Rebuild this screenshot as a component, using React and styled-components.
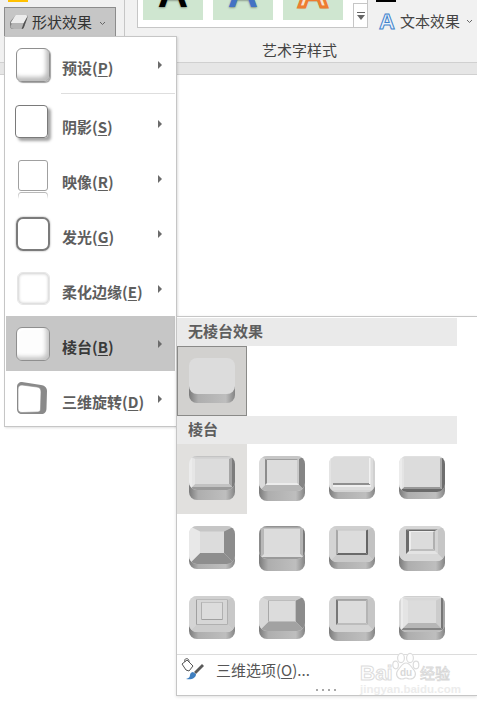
import React, { useId } from 'react';
import styled, { createGlobalStyle, css } from 'styled-components';

const GlobalStyle = createGlobalStyle`
  html, body {
    margin: 0;
    padding: 0;
    background: #ffffff;
  }
`;

const CJK = `"Noto Sans CJK SC", "Noto Sans", sans-serif`;

const Page = styled.div`
  position: relative;
  width: 477px;
  height: 707px;
  overflow: hidden;
  background: #ffffff;
  font-family: ${CJK};
  font-size: 15px;
`;

/* ---------- ribbon behind the menus ---------- */

const Ribbon = styled.div`
  display: flex;
  height: 62px;
  background: #f1f1f1;
  color: #444444;
`;

const ShapeGroup = styled.div`
  box-sizing: border-box;
  width: 125px;
  padding-left: 8px;
  border-right: 1px solid #c6c6c6;
`;

const YellowMark = styled.div`
  width: 20px;
  height: 2px;
  background: #ffc000;
`;

const ArtGroup = styled.div`
  display: flex;
  flex-direction: column;
  width: 349px;
`;

const ArtTop = styled.div`
  display: flex;
  padding-left: 12px;
`;

const Gallery = styled.div`
  box-sizing: border-box;
  display: flex;
  gap: 10px;
  width: 231px;
  height: 28px;
  padding-left: 5px;
  background: #ffffff;
  border: 1px solid #c6c6c6;
  border-top: 0;
`;

const Tile = styled.div`
  flex: none;
  display: flex;
  justify-content: center;
  width: 60px;
  height: 20px;
  overflow: hidden;
  background: #cfe6d0;
`;

const TileLetter = styled.span`
  margin-top: -28px;
  font-family: "Liberation Sans", sans-serif;
  font-size: 42px;
  font-weight: 700;
  line-height: 42px;
  color: ${(p) => p.$fill};
  -webkit-text-stroke: ${(p) => (p.$stroke ? `3px ${p.$stroke}` : '0')};
  text-shadow: 0 1px 2px rgba(0, 0, 0, 0.35);
`;

const MoreButton = styled.div`
  box-sizing: border-box;
  display: flex;
  align-items: center;
  justify-content: center;
  align-self: flex-end;
  width: 18px;
  height: 24px;
  margin-left: auto;
  border-top: 1px solid #c6c6c6;
  border-left: 1px solid #c6c6c6;
`;

const ArtRight = styled.div`
  display: flex;
  flex-direction: column;
  padding-left: 8px;
`;

const BlackMark = styled.div`
  width: 20px;
  height: 2px;
  background: #000000;
`;

const TextEffect = styled.div`
  display: flex;
  align-items: center;
  height: 22px;
  margin-top: 7px;
  margin-left: 3px;
  white-space: nowrap;
  color: #444444;
`;

const TextEffectLetter = styled.span`
  width: 21px;
  margin-top: 3px;
  font-family: "Liberation Sans", sans-serif;
  font-size: 22px;
  font-weight: 700;
  line-height: 22px;
  color: #eaf2fb;
  -webkit-text-stroke: 1px #3f83cc;
`;

const Chevron = styled.svg`
  flex: none;
  width: 7px;
  height: 5px;
  margin-left: ${(p) => p.$gap}px;
  margin-top: 2px;
`;

const ArtLabel = styled.div`
  margin-top: 8px;
  text-align: center;
  line-height: 22px;
  color: #444444;
`;

const Band = styled.div`
  box-sizing: border-box;
  height: 13px;
  background: #e6e6e6;
  border-top: 1px solid #d0d0d0;
  border-bottom: 1px solid #d0d0d0;
`;

const ShapeButton = styled.div`
  position: absolute;
  top: 7px;
  left: 4px;
  box-sizing: border-box;
  display: flex;
  align-items: center;
  width: 112px;
  height: 30px;
  padding-left: 4px;
  background: #c6c6c6;
  border: 1px solid #8c8c8c;
  color: #333333;
  white-space: nowrap;
`;

const ShapeButtonLabel = styled.span`
  margin-left: 3px;
  margin-top: -2px;
`;

/* ---------- left menu ---------- */

const Menu = styled.div`
  position: absolute;
  top: 36px;
  left: 4px;
  box-sizing: border-box;
  width: 173px;
  height: 391px;
  padding: 0 1px;
  background: #ffffff;
  border: 1px solid #c6c6c6;
  box-shadow: 1px 1px 2px rgba(0, 0, 0, 0.12);
`;

const MenuRow = styled.div`
  display: flex;
  align-items: center;
  height: 55px;
  padding-left: 10px;
  background: ${(p) => (p.$active ? '#c6c6c6' : 'transparent')};
  color: ${(p) => (p.$active ? '#3a3a3a' : '#5e5e5e')};
`;

const IconSlot = styled.div`
  flex: none;
  display: flex;
  width: 46px;
`;

const effectKinds = {
  preset: css`
    border: 1px solid #8f8f8f;
    border-radius: 6px;
    box-shadow: inset -3px -4px 4px #bdbdbd, 1px 1px 1px #a0a0a0;
  `,
  shadow: css`
    width: 31px;
    height: 31px;
    margin: -4px 0 0 -1px;
    border: 1px solid #7a7a7a;
    border-radius: 4px;
    box-shadow: 3px 3px 3px #a5a5a5;
  `,
  reflection: css`
    position: relative;
    width: 28px;
    height: 29px;
    margin: -7px 0 0 2px;
    border: 1px solid #a0a0a0;
    border-radius: 3px;

    &::after {
      content: '';
      position: absolute;
      top: 31px;
      left: -1px;
      right: -1px;
      height: 6px;
      border: 1px solid #b4b4b4;
      border-bottom: 0;
      border-radius: 3px 3px 0 0;
      -webkit-mask-image: linear-gradient(#000000, transparent);
      mask-image: linear-gradient(#000000, transparent);
    }
  `,
  glow: css`
    box-sizing: border-box;
    width: 34px;
    height: 34px;
    border: 2px solid #7b7b7b;
    border-radius: 7px;
    box-shadow: 0 0 2px #9a9a9a;
  `,
  soft: css`
    width: 31px;
    height: 31px;
    margin-left: 1px;
    border: 1px solid #e6e6e6;
    border-radius: 6px;
    box-shadow: inset 0 0 3px 1px #cfcfcf;
  `,
  bevel: css`
    background: #fdfdfd;
    border: 1px solid #8f8f8f;
    border-radius: 6px;
    box-shadow: inset -3px -3px 4px #c4c4c4, inset 2px 2px 2px #ffffff;
  `,
};

const EffectIcon = styled.div`
  flex: none;
  width: 32px;
  height: 32px;
  ${(p) => effectKinds[p.$kind]}
`;

const MenuLabel = styled.span`
  padding-top: 5px;
  font-weight: 700;
  white-space: nowrap;

  u {
    text-underline-offset: 2px;
  }
`;

const SubArrow = styled.div`
  flex: none;
  width: 0;
  height: 0;
  margin-left: auto;
  margin-right: 13px;
  border-top: 4px solid transparent;
  border-bottom: 4px solid transparent;
  border-left: 4px solid #6b6b6b;
`;

const MenuSeparator = styled.div`
  height: 1px;
  margin: 1px 0 2px 55px;
  background: #dedede;
`;

/* ---------- bevel submenu ---------- */

const SubMenu = styled.div`
  position: absolute;
  top: 316px;
  left: 176px;
  box-sizing: border-box;
  width: 301px;
  height: 380px;
  padding-top: 1px;
  background: #ffffff;
  border: 1px solid #c6c6c6;
  border-right: 0;
  box-shadow: 0 1px 3px rgba(0, 0, 0, 0.12);
`;

const SectionHeader = styled.div`
  box-sizing: border-box;
  width: 280px;
  height: 28px;
  padding-left: 11px;
  background: #eaeaea;
  color: #5e5e5e;
  font-weight: 700;
  line-height: 26px;
`;

const BevelGrid = styled.div`
  display: grid;
  grid-template-columns: repeat(4, 70px);
  grid-auto-rows: 70px;
`;

const BevelCell = styled.div`
  box-sizing: border-box;
  display: flex;
  justify-content: center;
  padding-top: ${(p) => (p.$selected ? 11 : 12)}px;
  background: ${(p) => (p.$selected ? '#d2d1cf' : p.$hot ? '#e1e0de' : 'transparent')};
  border: ${(p) => (p.$selected ? '1px solid #8a8a88' : '0')};
`;

const OptionsRow = styled.div`
  display: flex;
  align-items: flex-start;
  height: 39px;
  padding: 2px 0 0 4px;
  box-sizing: border-box;
  border-top: 1px solid #dcdcdc;
  color: #555555;
  white-space: nowrap;

  u {
    text-underline-offset: 2px;
  }
`;

const OptionsLabel = styled.span`
  margin-left: 11px;
  margin-top: 2px;
  line-height: 22px;
`;

const ResizeDots = styled.div`
  position: absolute;
  left: 139px;
  bottom: 4px;
  display: flex;
  gap: 4px;
`;

const Dot = styled.span`
  width: 2px;
  height: 2px;
  background: #a8a8a8;
`;

/* ---------- watermark ---------- */

const Watermark = styled.div`
  position: absolute;
  top: 652px;
  left: 360px;
  width: 92px;
  height: 44px;
  display: flex;
  flex-wrap: wrap;
  align-items: flex-start;
  pointer-events: none;
`;

const MarkWord = styled.span`
  width: 32px;
  margin-top: 11px;
  font-family: "Liberation Sans", sans-serif;
  font-size: 21px;
  font-weight: 700;
  line-height: 20px;
  color: #ffffff;
  -webkit-text-stroke: 1px #dcdcdc;
`;

const MarkCjk = styled.span`
  margin-top: 12px;
  font-size: 15px;
  line-height: 18px;
  color: #ffffff;
  -webkit-text-stroke: 0.8px #d8d8d8;
`;

const MarkUrl = styled.span`
  width: 100%;
  margin-top: -1px;
  font-family: "Liberation Sans", sans-serif;
  font-size: 11.5px;
  font-weight: 700;
  line-height: 12px;
  color: #ececec;
  white-space: nowrap;
`;

/* ---------- drawn icons ---------- */

const ChevronDown = ({ gap }) => (
  <Chevron $gap={gap} viewBox="0 0 7 5">
    <path d="M1 1l2.5 2.5L6 1" fill="none" stroke="#666" strokeWidth="1" />
  </Chevron>
);

const EraserIcon = () => (
  <svg width="20" height="16" viewBox="0 0 20 16">
    <path d="M7 1h10c1.500 0 2 1 1.500 2.500L15 13c-.5 1-1 2-2.500 2H4c-2 0-3-1-3-3V9c0-1 .5-2 1.500-3z" fill="#7f7f7f" />
    <path d="M7 1h10c1.200 0 1.600 1 1 2L14.500 9.500 3 9.500c-1 0-1.500-1-.5-2L6 2c.3-.6.5-1 1-1z" fill="#ececec" />
    <path d="M18.500 3L15 13c-.5 1-1 2-2.500 2l2-5.500z" fill="#505050" />
    <path d="M3 9.500h11.500L12.500 15H5c-2 0-3.500-1-3.500-3z" fill="#b4b4b4" />
  </svg>
);

const RotatedIcon = () => (
  <svg width="32" height="35" viewBox="0 0 32 35">
    <path d="M6 1l19 3c3 .5 6 2 6 6l-.5 17c0 4-2 6-5 6L6 33c-3 0-5-2-5-5V6c0-3 2-5 5-5z" fill="#8a8a8a" />
    <path d="M6 4l15 2c3 .5 4 2 4 5l-.5 17c0 2-1 3-3 3L6 31.500c-3-.2-4-1.500-4-4V8c0-3 2-4 4-4z" fill="#ffffff" stroke="#8a8a8a" strokeWidth="0.6" />
  </svg>
);

const BucketBrushIcon = () => (
  <svg width="24" height="24" viewBox="0 0 24 24">
    <path d="M1 7l5-4 6 6-4 5-3-1z" fill="#ffffff" stroke="#555" strokeWidth="1" />
    <path d="M4 5c-1-3 1-4 3-3 1 1 1 2 1 3" fill="none" stroke="#555" strokeWidth="1" />
    <path d="M23 9l-8 8-2-2 8-8z" fill="#5a5a5a" />
    <path d="M12 15l3 2c0 4-4 6-10 5 3-1 4-2 4-4 0-2 2-3 3-3z" fill="#3f7fc0" />
  </svg>
);

const MoreIcon = () => (
  <svg width="10" height="10" viewBox="0 0 10 10">
    <rect x="1" y="1" width="8" height="1" fill="#666" />
    <path d="M1 4h8L5 9z" fill="#666" />
  </svg>
);

const PawIcon = () => (
  <svg width="28" height="30" viewBox="0 0 28 30">
    <g fill="#ffffff" stroke="#dcdcdc" strokeWidth="1.2">
      <ellipse cx="9" cy="6" rx="3.4" ry="4.6" />
      <ellipse cx="18" cy="6" rx="3.4" ry="4.6" />
      <ellipse cx="3.6" cy="13" rx="2.8" ry="3.8" />
      <ellipse cx="24" cy="13" rx="2.8" ry="3.8" />
      <path d="M14 11c4 0 5 4 8 7 3 4 1 9-4 9-2 0-3-1-4-1s-2 1-4 1c-5 0-7-5-4-9 3-3 4-7 8-7z" />
    </g>
    <text x="14" y="24" textAnchor="middle" fontSize="10" fontWeight="700" fontFamily="Liberation Sans, sans-serif" fill="#d8d8d8">du</text>
  </svg>
);

/* four trapezoids between two nested rectangles of the top face.
   the key is seen from above at an angle, so the top edge runs at half width */
const frameShapes = (W, H, at, w, colors) => {
  const a = at;
  const b = at + w;
  const ta = at * 0.5;
  const tb = b * 0.5;
  const [top, right, bottom, left] = colors;
  return (
    <g key={`${at}-${w}`}>
      <polygon fill={top} points={`${a},${ta} ${W - a},${ta} ${W - b},${tb} ${b},${tb}`} />
      <polygon fill={right} points={`${W - a},${ta} ${W - a},${H - a} ${W - b},${H - b} ${W - b},${tb}`} />
      <polygon fill={bottom} points={`${a},${H - a} ${W - a},${H - a} ${W - b},${H - b} ${b},${H - b}`} />
      <polygon fill={left} points={`${a},${ta} ${a},${H - a} ${b},${H - b} ${b},${tb}`} />
    </g>
  );
};

const BevelIcon = ({ h = 44, side = 8, frames = [], bars = [] }) => {
  const id = useId();
  const W = 46;
  const faceH = h - side;
  return (
    <svg width={W} height={h} viewBox={`0 0 ${W} ${h}`}>
      <defs>
        <linearGradient id={`${id}s`} x1="0" x2="1" y1="0" y2="0">
          <stop offset="0" stopColor="#7a7a7a" />
          <stop offset="0.2" stopColor="#aeaeae" />
          <stop offset="0.8" stopColor="#bebebe" />
          <stop offset="1" stopColor="#848484" />
        </linearGradient>
        <clipPath id={`${id}c`}>
          <rect width={W} height={faceH} rx="8" />
        </clipPath>
        <filter id={`${id}b`} x="-5%" y="-5%" width="110%" height="110%">
          <feGaussianBlur stdDeviation="0.55" />
        </filter>
      </defs>
      <rect y={h - 24} width={W} height="24" rx="8" fill={`url(#${id}s)`} />
      <g clipPath={`url(#${id}c)`}>
        <rect width={W} height={faceH} fill="#dcdcdc" />
        <g filter={`url(#${id}b)`}>
          {frames.map(([at, w, colors]) => frameShapes(W, faceH, at, w, colors))}
          {bars.map(([x, y, bw, bh, fill]) => (
            <rect key={`${x}-${y}-${bw}`} x={x} y={y} width={bw} height={bh} fill={fill} />
          ))}
        </g>
      </g>
    </svg>
  );
};

const BEVELS = [
  {
    h: 44,
    side: 10,
    frames: [
      [0, 3, ['#c4c4c4', '#7c7c7c', '#9a9a9a', '#ececec']],
      [3, 3, ['#d4d4d4', '#a4a4a4', '#c2c2c2', '#e6e6e6']],
    ],
  },
  {
    h: 45,
    side: 10,
    frames: [
      [0, 6, ['#c6c6c6', '#858585', '#b6b6b6', '#dadada']],
      [6, 2, ['#a0a0a0', '#c8c8c8', '#ececec', '#8c8c8c']],
    ],
  },
  {
    h: 43,
    side: 7,
    frames: [[0, 2, ['#e2e2e2', '#d0d0d0', '#d4d4d4', '#e4e4e4']]],
    bars: [
      [4, 27, 37, 2, '#8f8f8f'],
      [40, 2, 1.5, 26, '#f2f2f2'],
      [4, 29, 38, 2, '#f0f0f0'],
    ],
  },
  {
    h: 43,
    side: 7,
    frames: [
      [0, 3, ['#e0e0e0', '#6e6e6e', '#6a6a6a', '#ececec']],
      [3, 2, ['#dcdcdc', '#a8a8a8', '#989898', '#e4e4e4']],
    ],
  },
  {
    h: 43,
    side: 5,
    frames: [[0, 11, ['#c6c6c6', '#8c8c8c', '#8e8e8e', '#e8e8e8']]],
  },
  {
    h: 45,
    side: 12,
    frames: [
      [0, 2, ['#929292', '#7a7a7a', '#9a9a9a', '#8c8c8c']],
      [2, 3, ['#a8a8a8', '#b4b4b4', '#dedede', '#b8b8b8']],
    ],
  },
  {
    h: 43,
    side: 7,
    frames: [
      [0, 7, ['#cfcfcf', '#c2c2c2', '#cacaca', '#d4d4d4']],
      [7, 2, ['#c4c4c4', '#666666', '#6a6a6a', '#a8a8a8']],
    ],
  },
  {
    h: 45,
    side: 10,
    frames: [
      [0, 7, ['#d6d6d6', '#c6c6c6', '#d8d8d8', '#d6d6d6']],
      [7, 3, ['#6c6c6c', '#d4d4d4', '#e4e4e4', '#6c6c6c']],
      [10, 2, ['#eeeeee', '#b0b0b0', '#bdbdbd', '#eeeeee']],
    ],
  },
  {
    h: 43,
    side: 7,
    frames: [
      [0, 7, ['#d0d0d0', '#c8c8c8', '#cccccc', '#d4d4d4']],
      [7, 1, ['#a0a0a0', '#b0b0b0', '#b0b0b0', '#a0a0a0']],
      [8, 4, ['#d6d6d6', '#d6d6d6', '#d6d6d6', '#d6d6d6']],
      [12, 1, ['#a0a0a0', '#b0b0b0', '#a0a0a0', '#b0b0b0']],
    ],
  },
  {
    h: 43,
    side: 8,
    frames: [
      [0, 9, ['#cccccc', '#8c8c8c', '#a2a2a2', '#d8d8d8']],
      [9, 1, ['#a8a8a8', '#c0c0c0', '#bcbcbc', '#a8a8a8']],
    ],
  },
  {
    h: 45,
    side: 9,
    frames: [
      [0, 7, ['#cccccc', '#c6c6c6', '#d4d4d4', '#d4d4d4']],
      [7, 2, ['#777777', '#b4b4b4', '#bcbcbc', '#777777']],
    ],
  },
  {
    h: 44,
    side: 8,
    frames: [
      [0, 2, ['#cfcfcf', '#a6a6a6', '#bdbdbd', '#d8d8d8']],
      [2, 2, ['#dedede', '#767676', '#848484', '#ececec']],
      [4, 5, ['#d8d8d8', '#cccccc', '#b6b6b6', '#e4e4e4']],
    ],
  },
];

const MENU_ITEMS = [
  { kind: 'shadow', label: '阴影', key: 'S' },
  { kind: 'reflection', label: '映像', key: 'R' },
  { kind: 'glow', label: '发光', key: 'G' },
  { kind: 'soft', label: '柔化边缘', key: 'E' },
  { kind: 'bevel', label: '棱台', key: 'B', active: true },
  { kind: 'rotation', label: '三维旋转', key: 'D' },
];

const Row = ({ kind, label, hotkey, active }) => (
  <MenuRow $active={active}>
    <IconSlot>
      {kind === 'rotation' ? <RotatedIcon /> : <EffectIcon $kind={kind} />}
    </IconSlot>
    <MenuLabel>
      {label}(<u>{hotkey}</u>)
    </MenuLabel>
    <SubArrow />
  </MenuRow>
);

const App = () => (
  <Page>
    <GlobalStyle />
    <Ribbon>
      <ShapeGroup>
        <YellowMark />
      </ShapeGroup>
      <ArtGroup>
        <ArtTop>
          <Gallery>
            <Tile><TileLetter $fill="#000000">A</TileLetter></Tile>
            <Tile><TileLetter $fill="#4472c4">A</TileLetter></Tile>
            <Tile><TileLetter $fill="#f9e3d2" $stroke="#ed7d31">A</TileLetter></Tile>
            <MoreButton><MoreIcon /></MoreButton>
          </Gallery>
          <ArtRight>
            <BlackMark />
            <TextEffect>
              <TextEffectLetter>A</TextEffectLetter>
              文本效果
              <ChevronDown gap={6} />
            </TextEffect>
          </ArtRight>
        </ArtTop>
        <ArtLabel>艺术字样式</ArtLabel>
      </ArtGroup>
    </Ribbon>
    <Band />

    <ShapeButton>
      <EraserIcon />
      <ShapeButtonLabel>形状效果</ShapeButtonLabel>
      <ChevronDown gap={7} />
    </ShapeButton>

    <Menu>
      <Row kind="preset" label="预设" hotkey="P" />
      <MenuSeparator />
      {MENU_ITEMS.map((item) => (
        <Row key={item.key} kind={item.kind} label={item.label} hotkey={item.key} active={item.active} />
      ))}
    </Menu>

    <SubMenu>
      <SectionHeader>无棱台效果</SectionHeader>
      <BevelGrid>
        <BevelCell $selected>
          <BevelIcon h={45} side={9} />
        </BevelCell>
      </BevelGrid>
      <SectionHeader>棱台</SectionHeader>
      <BevelGrid>
        {BEVELS.map((bevel, i) => (
          <BevelCell key={i} $hot={i === 0}>
            <BevelIcon {...bevel} />
          </BevelCell>
        ))}
      </BevelGrid>
      <OptionsRow>
        <BucketBrushIcon />
        <OptionsLabel>
          三维选项(<u>O</u>)...
        </OptionsLabel>
      </OptionsRow>
      <ResizeDots>
        <Dot /><Dot /><Dot /><Dot />
      </ResizeDots>
    </SubMenu>

    <Watermark>
      <MarkWord>Bai</MarkWord>
      <PawIcon />
      <MarkCjk>经验</MarkCjk>
      <MarkUrl>jingyan.baidu.com</MarkUrl>
    </Watermark>
  </Page>
);

export default App;
